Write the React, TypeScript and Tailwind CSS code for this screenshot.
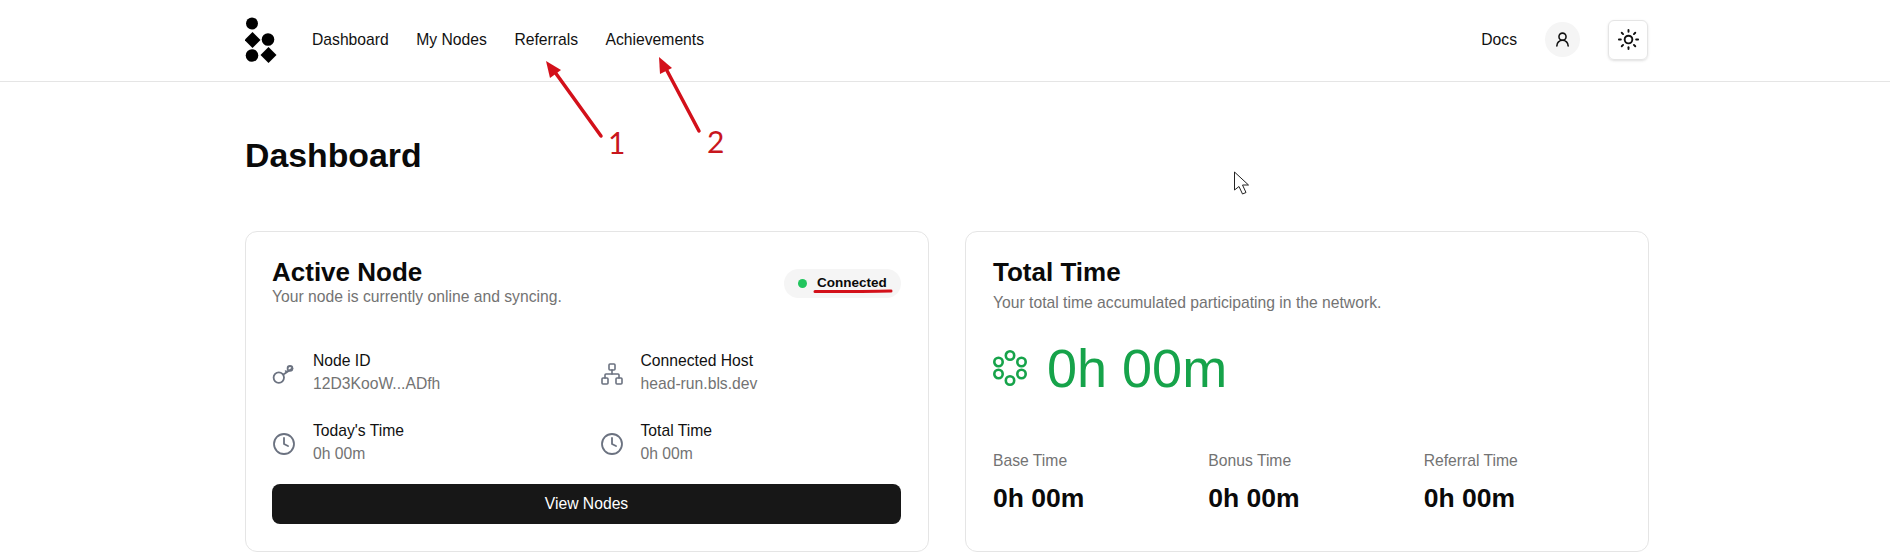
import React from 'react';
import { Clock, Network, Sun, UserRound } from 'lucide-react';

const Logo: React.FC = () => (
    <svg width="32" height="46" viewBox="0 0 32 46" fill="#000">
        <circle cx="7" cy="6.5" r="6" />
        <polygon points="7,15 15,23 7,31 -1,23" transform="translate(0.5 0)" />
        <circle cx="23" cy="22.5" r="6.3" />
        <circle cx="7" cy="38.5" r="6.3" />
        <polygon points="23.5,30 31.5,38 23.5,46 15.5,38" />
    </svg>
);

const KeyIcon: React.FC = () => (
    <svg width="24" height="24" viewBox="0 0 24 24" fill="none" stroke="#6b7280" strokeWidth="1.8">
        <circle cx="6.8" cy="15.6" r="5.2" />
        <path d="M11 12.8 L21 6" />
        <circle cx="18" cy="6.4" r="2.4" />
        <path d="M14.6 10.4 L13.4 8.4" />
    </svg>
);

const RingIcon: React.FC = () => (
    <svg width="34" height="36" viewBox="0 0 34 36" fill="none" stroke="#16a34a" strokeWidth="2.6">
        <circle cx="17" cy="5.5" r="4.2" />
        <circle cx="5.5" cy="12" r="4.2" />
        <circle cx="28.5" cy="12" r="4.2" />
        <circle cx="5.5" cy="24" r="4.2" />
        <circle cx="28.5" cy="24" r="4.2" />
        <circle cx="17" cy="30.5" r="4.2" />
    </svg>
);

const NavLink: React.FC<{ label: string }> = ({ label }) => (
    <a className="text-[15.7px] text-[#111]">{label}</a>
);

const InfoRow: React.FC<{ icon: React.ReactNode; label: string; value: string }> = ({ icon, label, value }) => (
    <div className="flex items-center gap-[17px] h-[50px]">
        <div className="w-6 shrink-0 mt-1">{icon}</div>
        <div>
            <p className="text-[15.7px] leading-[23px] text-[#111]">{label}</p>
            <p className="text-[15.7px] leading-[23px] text-[#737373]">{value}</p>
        </div>
    </div>
);

const StatCol: React.FC<{ label: string; value: string }> = ({ label, value }) => (
    <div>
        <p className="text-[15.7px] leading-6 text-[#737373]">{label}</p>
        <p className="mt-[9px] text-[26.5px] leading-8 font-bold text-[#0a0a0a]">{value}</p>
    </div>
);

// annotations drawn on top of the screenshot
const Annotations: React.FC = () => (
    <>
        <svg className="absolute left-0 top-0 pointer-events-none" width="1890" height="552" fill="none">
            <path d="M601 136 L552 68" stroke="#d3101a" strokeWidth="3.5" strokeLinecap="round" />
            <polygon points="546,61 561,70 550,78" fill="#d3101a" />
            <path d="M699 131 L664 65" stroke="#d3101a" strokeWidth="3.5" strokeLinecap="round" />
            <polygon points="659,57 672,68 660,74" fill="#d3101a" />
            <path d="M815 291.5 C835 291.5, 870 291.5, 891 291" stroke="#d3101a" strokeWidth="3" strokeLinecap="round" />
            <path
                d="M1234.5 172 L1234.5 190 L1239 186.5 L1242.5 194 L1246 192.5 L1242.5 185 L1248.5 185 Z"
                fill="#fff"
                stroke="#222"
                strokeWidth="1"
            />
        </svg>
        <span className="absolute left-[608px] top-[124px] text-[30px] leading-9 text-[#c8161d] font-['Lato',sans-serif]">1</span>
        <span className="absolute left-[707px] top-[123px] text-[30px] leading-9 text-[#c8161d] font-['Lato',sans-serif]">2</span>
    </>
);

const App: React.FC = () => {
    return (
        <div className="relative w-[1890px] h-[552px] overflow-hidden bg-white font-['Liberation_Sans',Arial,sans-serif]">
            <header className="h-[82px] border-b border-[#e5e5e5]">
                <div className="ml-[245px] w-[1403px] h-full pb-[2px] flex items-center justify-between">
                    <div className="flex items-center gap-[27px]">
                        <div className="w-[40px]"><Logo /></div>
                        <nav className="flex items-center gap-[27.5px]">
                            <NavLink label="Dashboard" />
                            <NavLink label="My Nodes" />
                            <NavLink label="Referrals" />
                            <NavLink label="Achievements" />
                        </nav>
                    </div>
                    <div className="flex items-center">
                        <a className="text-[15.7px] text-[#111]">Docs</a>
                        <div className="ml-7 w-[35px] h-[35px] rounded-full bg-[#f5f5f5] flex items-center justify-center">
                            <UserRound size={17} color="#111" strokeWidth={2.2} />
                        </div>
                        <button className="ml-7 w-10 h-10 rounded-md border border-[#e5e5e5] shadow-sm flex items-center justify-center">
                            <Sun size={23} color="#111" strokeWidth={2} />
                        </button>
                    </div>
                </div>
            </header>

            <main className="ml-[245px] w-[1404px]">
                <h1 className="mt-[53px] text-[33.8px] leading-10 font-bold text-[#0a0a0a]">Dashboard</h1>
                <div className="mt-[56px] grid grid-cols-2 gap-9">
                    <section className="h-[321px] rounded-xl border border-[#e5e5e5] pl-[26px] pr-[27px] pt-[25px]">
                        <div className="flex items-start justify-between">
                            <div>
                                <h2 className="text-[26px] leading-[30px] font-bold text-[#0a0a0a]">Active Node</h2>
                                <p className="text-[15.7px] leading-5 text-[#737373]">Your node is currently online and syncing.</p>
                            </div>
                            <div className="mt-[12px] flex items-center h-[29px] w-[117px] rounded-full bg-[#f5f5f5] pl-[14px]">
                                <span className="w-[9px] h-[9px] rounded-full bg-[#22c55e]" />
                                <span className="ml-[10px] text-[13.5px] font-bold text-[#0a0a0a]">Connected</span>
                            </div>
                        </div>
                        <div className="mt-[40px] grid grid-cols-2 gap-x-[26px] gap-y-[20px]">
                            <InfoRow icon={<KeyIcon />} label="Node ID" value="12D3KooW...ADfh" />
                            <InfoRow icon={<Network size={24} color="#6b7280" strokeWidth={1.6} />} label="Connected Host" value="head-run.bls.dev" />
                            <InfoRow icon={<Clock size={24} color="#6b7280" strokeWidth={1.8} />} label="Today's Time" value="0h 00m" />
                            <InfoRow icon={<Clock size={24} color="#6b7280" strokeWidth={1.8} />} label="Total Time" value="0h 00m" />
                        </div>
                        <button className="mt-[17px] w-full h-10 rounded-lg bg-[#171717] text-[15.7px] text-white">View Nodes</button>
                    </section>

                    <section className="h-[321px] rounded-xl border border-[#e5e5e5] px-[27px] pt-[25px]">
                        <h2 className="text-[26px] leading-[30px] font-bold text-[#0a0a0a]">Total Time</h2>
                        <p className="mt-[6px] text-[15.7px] leading-5 text-[#737373]">Your total time accumulated participating in the network.</p>
                        <div className="mt-[25px] flex items-center gap-[20px]">
                            <RingIcon />
                            <span className="text-[54px] leading-[60px] text-[#16a34a]">0h 00m</span>
                        </div>
                        <div className="mt-[51px] grid grid-cols-3 gap-[18px]">
                            <StatCol label="Base Time" value="0h 00m" />
                            <StatCol label="Bonus Time" value="0h 00m" />
                            <StatCol label="Referral Time" value="0h 00m" />
                        </div>
                    </section>
                </div>
            </main>

            <Annotations />
        </div>
    );
};

export default App;
